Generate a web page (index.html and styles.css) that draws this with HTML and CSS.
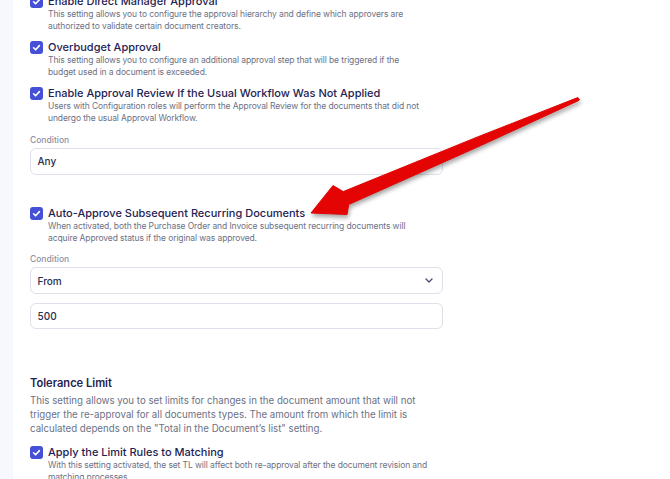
FILE: index.html
```html
<!DOCTYPE html>
<html lang="en">
<head>
<meta charset="utf-8">
<title>Approval settings</title>
<link rel="stylesheet" href="styles.css">
</head>
<body>
<div class="page">
  <aside class="rail"></aside>
  <main class="content">
    <div class="setting">
      <span class="check"><svg viewBox="0 0 13 13"><polyline points="3.6,6.8 5.6,8.8 9.4,4.6"/></svg></span>
      <div>
        <div class="setting-title">Enable Direct Manager Approval</div>
        <p class="setting-desc">This setting allows you to configure the approval hierarchy and define which approvers are authorized to validate certain document creators.</p>
      </div>
    </div>
    <div class="setting">
      <span class="check"><svg viewBox="0 0 13 13"><polyline points="3.6,6.8 5.6,8.8 9.4,4.6"/></svg></span>
      <div>
        <div class="setting-title">Overbudget Approval</div>
        <p class="setting-desc">This setting allows you to configure an additional approval step that will be triggered if the budget used in a document is exceeded.</p>
      </div>
    </div>
    <div class="setting">
      <span class="check"><svg viewBox="0 0 13 13"><polyline points="3.6,6.8 5.6,8.8 9.4,4.6"/></svg></span>
      <div>
        <div class="setting-title">Enable Approval Review If the Usual Workflow Was Not Applied</div>
        <p class="setting-desc">Users with Configuration roles will perform the Approval Review for the documents that did not undergo the usual Approval Workflow.</p>
      </div>
    </div>
    <div class="field field-first">
      <label class="field-label">Condition</label>
      <div class="input">Any</div>
    </div>

    <div class="setting setting-spaced">
      <span class="check"><svg viewBox="0 0 13 13"><polyline points="3.6,6.8 5.6,8.8 9.4,4.6"/></svg></span>
      <div>
        <div class="setting-title">Auto-Approve Subsequent Recurring Documents</div>
        <p class="setting-desc">When activated, both the Purchase Order and Invoice subsequent recurring documents will acquire Approved status if the original was approved.</p>
      </div>
    </div>
    <div class="field">
      <label class="field-label">Condition</label>
      <div class="input input-select">
        <span>From</span>
        <svg class="chevron" viewBox="0 0 8 5"><polyline points="1,1 4,4 7,1"/></svg>
      </div>
      <div class="input input-next">500</div>
    </div>

    <section class="group">
      <h3 class="group-title">Tolerance Limit</h3>
      <p class="group-desc">This setting allows you to set limits for changes in the document amount that will not trigger the re-approval for all documents types. The amount from which the limit is calculated depends on the "Total in the Document’s list" setting.</p>
      <div class="setting setting-group">
        <span class="check"><svg viewBox="0 0 13 13"><polyline points="3.6,6.8 5.6,8.8 9.4,4.6"/></svg></span>
        <div>
          <div class="setting-title">Apply the Limit Rules to Matching</div>
          <p class="setting-desc">With this setting activated, the set TL will affect both re-approval after the document revision and matching processes.</p>
        </div>
      </div>
    </section>
  </main>

  <svg class="annotation" viewBox="0 0 670 479">
    <polygon class="arrow" points="311,213 333,185.5 343.2,191.6 478.2,136.7 577.7,97.6 579.3,99 578.9,100.4 481.8,145.1 348.7,204.5 347,214.5"/>
  </svg>
</div>
</body>
</html>
```

FILE: styles.css
```css
* { box-sizing: border-box; }

body {
  margin: 0;
  background: #ffffff;
  font-family: Inter, "Noto Sans", "Liberation Sans", sans-serif;
  color: #1f2352;
}

.page {
  position: relative;
  display: flex;
  height: 479px;
  overflow: hidden;
}

.rail {
  flex: none;
  width: 13px;
  background: #f7f8fd;
}

.content {
  width: 430px;
  padding-left: 17px;
  margin-top: -7px;
}

.setting {
  display: grid;
  grid-template-columns: 13px 1fr;
  column-gap: 5px;
  margin-bottom: 7px;
}

.setting-spaced { margin-top: 30.5px; }
.setting-group { margin-top: 8.5px; }

.check {
  width: 13px;
  height: 13px;
  margin-top: 1.5px;
  border-radius: 3px;
  background: #4650d6;
  display: flex;
}

.check svg {
  width: 13px;
  height: 13px;
}

.check polyline {
  fill: none;
  stroke: #ffffff;
  stroke-width: 1.6;
  stroke-linecap: round;
  stroke-linejoin: round;
}

.setting-title {
  font-size: 11px;
  line-height: 16px;
  font-weight: 500;
  color: #1f2352;
  white-space: nowrap;
}

.setting-desc {
  margin: 0;
  max-width: 380.6px;
  font-size: 8.5px;
  line-height: 11.5px;
  letter-spacing: -0.1px;
  color: #6c7185;
}

.field {
  margin-top: 8.5px;
  width: 413px;
}

.field-first { margin-top: 9.5px; }

.field-label {
  display: block;
  font-size: 8.5px;
  line-height: 12px;
  font-weight: 500;
  color: #8d91a3;
  margin-bottom: 2.7px;
}

.input {
  height: 26.5px;
  border: 1px solid #dfe1ea;
  border-radius: 6px;
  padding: 0 6.5px;
  display: flex;
  align-items: center;
  font-size: 10px;
  font-weight: 500;
  color: #2b2e4d;
}

.input-select {
  justify-content: space-between;
  padding-right: 9px;
}

.chevron {
  width: 8px;
  height: 5px;
}

.chevron polyline {
  fill: none;
  stroke: #4a4f73;
  stroke-width: 1.4;
  stroke-linecap: round;
  stroke-linejoin: round;
}

.input-next { margin-top: 9px; }

.group {
  margin-top: 46px;
  width: 413px;
}

.group-title {
  margin: 0;
  font-size: 11.1px;
  line-height: 16px;
  font-weight: 600;
  color: #1e2150;
}

.group-desc {
  margin: 3px 0 0;
  font-size: 9.7px;
  line-height: 13.8px;
  color: #6c7185;
}

.annotation {
  position: absolute;
  left: 0;
  top: 0;
  width: 670px;
  height: 479px;
  pointer-events: none;
}

.arrow {
  fill: #e40404;
  stroke: #e40404;
  stroke-width: 1;
  stroke-linejoin: round;
  filter: drop-shadow(1px 3px 2px rgba(0, 0, 0, 0.35));
}
```
